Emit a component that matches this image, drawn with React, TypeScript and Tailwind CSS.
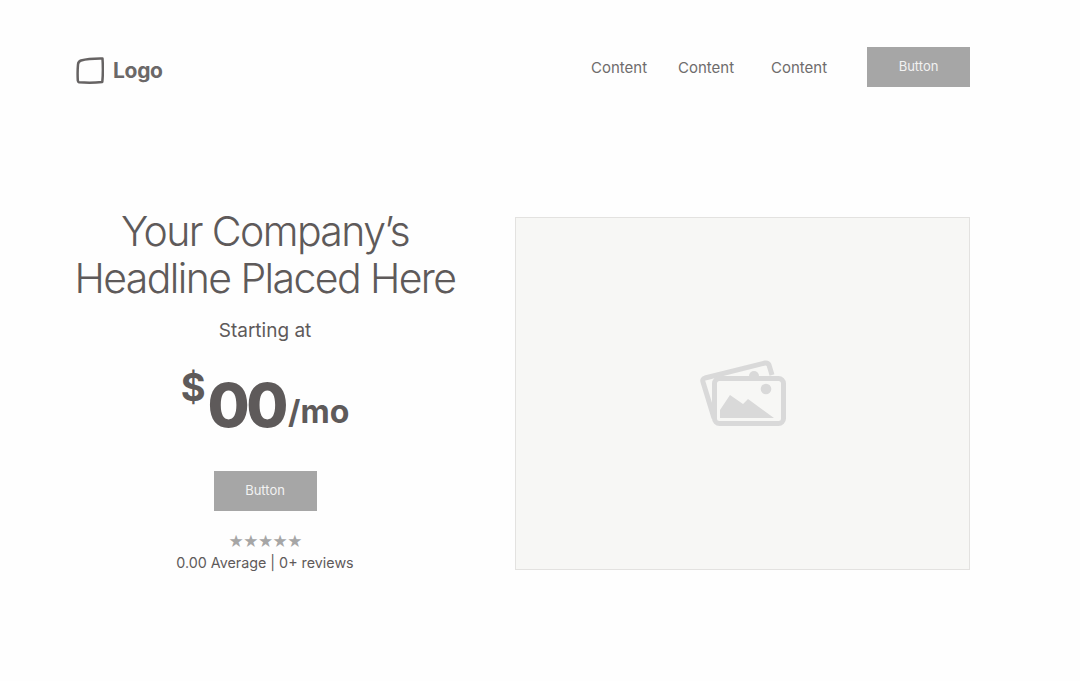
export default function App() {
  return (
    <div className="h-[681px] w-[1080px] overflow-hidden bg-[#fefefe] pl-[74px] pr-[110px] pt-[47px] font-['Inter',sans-serif] text-[#5e5a5a]">
      <header className="flex h-10 items-start justify-between">
        <div className="flex items-center gap-[9px] pl-[2px] pt-[10px]">
          <svg width="28" height="27" viewBox="0 0 28 27" fill="none" className="text-[#666363]">
            <path d="M2 7.500Q2.200 4.500 5 3.500C11 1.800 20 1.400 26.500 1.500C27 9 27 18 26.300 25C18 26 9 25.800 3 25.300Q2 25 1.800 23.500C1.500 18 1.600 12 2 7.500Z" stroke="currentColor" strokeWidth="2.500" strokeLinejoin="round" />
          </svg>
          <span className="text-[21px] font-bold leading-[27px] tracking-[-0.3px] text-[#6b6868]">Logo</span>
        </div>
        <nav className="flex items-start">
          <a className="mt-[12px] w-[56px] whitespace-nowrap text-[15px] leading-[18px] text-[#6e6c6c]">Content</a>
          <a className="ml-[31px] mt-[12px] w-[56px] whitespace-nowrap text-[15px] leading-[18px] text-[#6e6c6c]">Content</a>
          <a className="ml-[37px] mt-[12px] w-[56px] whitespace-nowrap text-[15px] leading-[18px] text-[#6e6c6c]">Content</a>
          <button className="ml-[40px] h-10 w-[103px] bg-[#a6a6a6] text-[13px] text-[#f2f2f2]">Button</button>
        </nav>
      </header>

      <main className="mt-[130px] flex items-start justify-between">
        <section className="flex w-[382px] flex-col items-center">
          <h1 className="-mt-[9px] whitespace-nowrap text-center text-[41px] font-[350] leading-[47px] tracking-[-1.600px] text-[#5e5a5a]">
            Your Company’s
            <br />
            Headline Placed Here
          </h1>
          <p className="mt-[17px] text-[19px] leading-[24px] text-[#5e5a5a]">Starting at</p>
          <div className="mt-[19px] flex h-[80px] items-start">
            <span className="mt-[3px] text-[38px] font-bold leading-[44px]">$</span>
            <span className="ml-[2px] mt-[3px] text-[61px] font-extrabold leading-[80px] tracking-[-3.500px]">00</span>
            <span className="ml-[3px] mt-[28px] text-[32px] font-bold leading-[44px]">/mo</span>
          </div>
          <button className="mt-[29px] h-10 w-[103px] bg-[#a6a6a6] text-[13px] text-[#f2f2f2]">Button</button>
          <div className="mt-[21px] text-[15px] leading-[20px] tracking-[-1px] text-[#a6a6a6]">★★★★★</div>
          <p className="mt-[1px] text-[14.300px] leading-[20px] text-[#5e5a5a]">0.00 Average | 0+ reviews</p>
        </section>

        <section className="flex h-[353px] w-[455px] items-center justify-center border border-[#e3e2e0] bg-[#f7f7f5]">
          <svg width="92" height="72" viewBox="0 0 92 72" fill="none" className="ml-[3px]">
            <path d="M16 60L5 24Q4 21 7 20L67 5Q70 4.500 71 7L74 17" stroke="#d9d9d9" strokeWidth="5" strokeLinejoin="round" />
            <path d="M51 18a5 5 0 0 1 10 0Z" fill="#d9d9d9" />
            <rect x="16.500" y="20.500" width="69" height="45" rx="5" fill="#f7f7f5" stroke="#d9d9d9" strokeWidth="5" />
            <circle cx="68" cy="31" r="5.300" fill="#d9d9d9" />
            <path d="M22 60V52L32 37L45 46L50 41L76 60Z" fill="#d9d9d9" />
          </svg>
        </section>
      </main>
    </div>
  );
}
